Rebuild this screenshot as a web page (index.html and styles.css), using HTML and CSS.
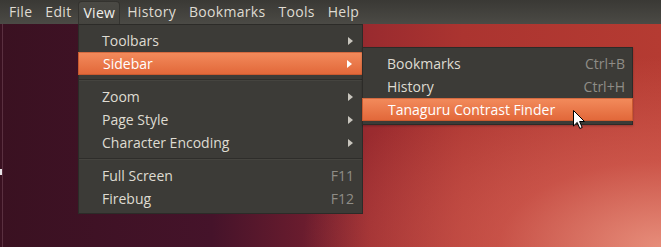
FILE: index.html
```html
<!DOCTYPE html>
<html lang="en">
<head>
    <meta charset="UTF-8">
    <title>View menu</title>
    <link rel="stylesheet" href="styles.css">
</head>
<body>

<div class="menubar">
    <span class="top-item">File</span>
    <span class="top-item">Edit</span>
    <span class="top-item open">View</span>
    <span class="top-item">History</span>
    <span class="top-item">Bookmarks</span>
    <span class="top-item">Tools</span>
    <span class="top-item">Help</span>
</div>

<div class="desktop">
    <div class="edge"><span class="edge-mark"></span></div>
</div>

<!-- View menu -->
<div class="menu main-menu">
    <div class="item"><span class="label">Toolbars</span><span class="arrow"></span></div>
    <div class="item active"><span class="label">Sidebar</span><span class="arrow"></span></div>
    <div class="separator"></div>
    <div class="item"><span class="label">Zoom</span><span class="arrow"></span></div>
    <div class="item"><span class="label">Page Style</span><span class="arrow"></span></div>
    <div class="item"><span class="label">Character Encoding</span><span class="arrow"></span></div>
    <div class="separator"></div>
    <div class="item"><span class="label">Full Screen</span><span class="key">F11</span></div>
    <div class="item"><span class="label">Firebug</span><span class="key">F12</span></div>
</div>

<!-- Sidebar submenu -->
<div class="menu sub-menu">
    <div class="item"><span class="label">Bookmarks</span><span class="key">Ctrl+B</span></div>
    <div class="item"><span class="label">History</span><span class="key">Ctrl+H</span></div>
    <div class="item active"><span class="label">Tanaguru Contrast Finder</span></div>
</div>

<svg class="cursor" width="13" height="20" viewBox="0 0 13 20">
    <path d="M0.5 0.5 L0.5 16 L4.2 12.4 L6.8 18.5 L9.2 17.5 L6.6 11.5 L11.5 11.5 Z" fill="#fff" stroke="#000" stroke-width="1"/>
</svg>

</body>
</html>
```

FILE: styles.css
```css
body {
    margin: 0;
    width: 661px;
    height: 247px;
    overflow: hidden;
    font-family: "Open Sans", "DejaVu Sans", sans-serif;
    font-size: 14px;
    color: #dfdbd2;
    background: #3c1222;
    position: relative;
}

.menubar {
    height: 24px;
    display: flex;
    padding-left: 3px;
    background: linear-gradient(#3a3935, #4b4a45);
    box-sizing: border-box;
    letter-spacing: 0.3px;
}

.top-item {
    padding: 0 6px;
    line-height: 24px;
    margin-right: 1px;
}

.top-item.open {
    margin-top: 1px;
    padding: 0 4px;
    line-height: 22px;
    background: linear-gradient(#4a4944, #45443f);
    border: 1px solid #34332f;
    border-bottom: none;
    border-radius: 4px 4px 0 0;
    color: #f2f1ed;
}

.desktop {
    height: 223px;
    background:
        radial-gradient(ellipse 360px 190px at 100% 100%, rgba(236, 150, 130, 0.9) 0%, rgba(226, 110, 95, 0.5) 45%, rgba(210, 80, 70, 0) 100%),
        linear-gradient(to right, #3a1121 0%, #45132a 32%, #6a1c2e 46%, #9a2b2f 56%, #ab3430 70%, #b53b32 100%);
}

.edge {
    width: 3px;
    height: 100%;
    border-right: 1px solid #5a3040;
    box-sizing: border-box;
    position: relative;
}

.edge-mark {
    position: absolute;
    left: 0;
    top: 145px;
    width: 2px;
    height: 6px;
    background: #e8e4e8;
}

.menu {
    position: absolute;
    background: #3c3b37;
    border: 1px solid #2c2b28;
    box-sizing: border-box;
}

.main-menu {
    left: 78px;
    top: 24px;
    width: 285px;
    height: 190px;
    padding: 4px 0;
}

.sub-menu {
    left: 362px;
    top: 47px;
    width: 271px;
    height: 78px;
    padding: 4px 0 3px;
    box-shadow: 0 1px 2px rgba(0, 0, 0, 0.25);
}

.item {
    height: 23px;
    display: flex;
    align-items: center;
    padding: 0 8px 0 23px;
}

.label {
    flex: 1;
}

.sub-menu .item {
    padding: 0 7px 0 24px;
}

.item.active {
    margin: 0 -1px;
    height: 21px;
    background: linear-gradient(#f28a5b, #e2683a);
    border: 1px solid #c95a30;
    border-top-color: #d46a40;
    color: #fff;
}

.main-menu .item.active {
    padding-left: 24px;
    padding-right: 9px;
}

.sub-menu .item.active {
    padding-left: 25px;
}

.arrow {
    width: 0;
    height: 0;
    border-top: 4px solid transparent;
    border-bottom: 4px solid transparent;
    border-left: 5px solid #c8c5bd;
    margin-right: 1px;
}

.item.active .arrow {
    border-left-color: #fff;
}

.key {
    color: #8f8d87;
}

.separator {
    height: 10px;
    display: flex;
    flex-direction: column;
    justify-content: center;
}

.separator::before {
    content: "";
    height: 1px;
    background: #2e2d2a;
    border-bottom: 1px solid #45443f;
}

.cursor {
    position: absolute;
    left: 573px;
    top: 110px;
}
```
